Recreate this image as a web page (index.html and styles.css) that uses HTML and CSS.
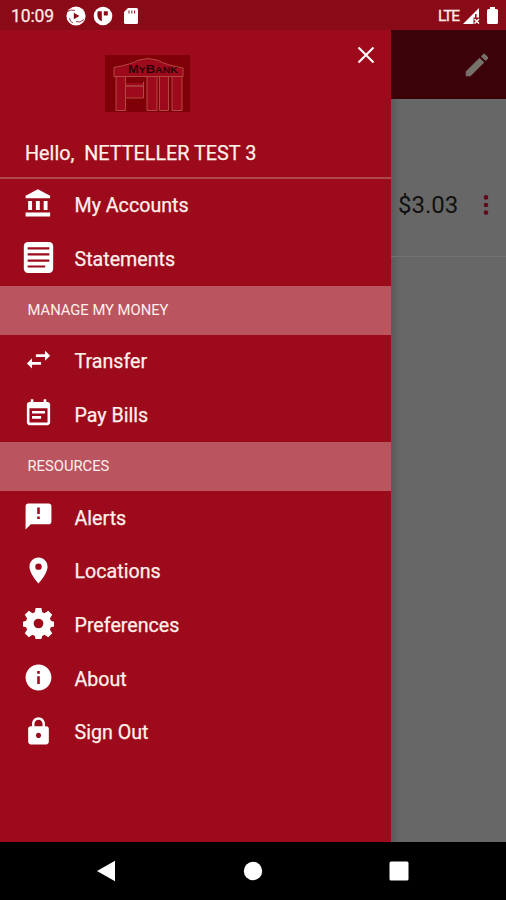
FILE: index.html
```html
<!DOCTYPE html>
<html lang="en">
<head>
<meta charset="utf-8">
<title>MyBank</title>
<link rel="stylesheet" href="styles.css">
</head>
<body>
<div class="phone">
  <header class="status">
    <span class="clock">10:09</span>
    <svg class="status-icon" viewBox="0 0 20 20"><circle cx="10" cy="10" r="9.600" fill="#fff"/><path d="M7.800 6.800v6.400l5.600-3.200z" fill="#8b0a17"/><path d="M1.500 5.500Q5 3 9 4.500M18 13.500Q14 17.500 10 15.500M3.500 12Q4 16 7 17" fill="none" stroke="#8b0a17" stroke-width=".8"/></svg>
    <svg class="status-icon second" viewBox="0 0 20 20"><circle cx="10" cy="10" r="9.300" fill="#fff"/><path d="M4.800 5.200h4v10C5 14 3.500 10 4.800 5.200zM10.800 5.200h4v4.300h-4z" fill="#8b0a17"/></svg>
    <svg class="sd" viewBox="0 0 14 16"><path d="M4 0h8.500Q14 0 14 1.500v13q0 1.500-1.500 1.500h-11Q0 16 0 14.500V4z" fill="#fff"/><path d="M5 2.500v3M7.800 2.500v3M10.600 2.500v3" stroke="#8b0a17" stroke-width="1"/></svg>
    <span class="lte">LTE</span>
    <svg class="signal" viewBox="0 0 17 16"><path d="M16 0v9.500h-5.500V16H0z" fill="#fff"/><path d="M11.500 11l4.500 4.500m0-4.500-4.500 4.500" stroke="#fff" stroke-width="1.500"/><path d="M12.800 6v4" stroke="#8b0a17" stroke-width="1.500"/></svg>
    <svg class="battery" viewBox="0 0 11 17"><path d="M3 0h5v2h1.500Q11 2 11 3.500v12q0 1.500-1.500 1.500h-8Q0 17 0 15.500v-12Q0 2 1.500 2H3z" fill="#fff"/></svg>
  </header>
  <main class="screen">
    <nav class="drawer">
      <div class="profile">
        <svg class="logo" viewBox="0 0 85 57">
          <path fill="#800007" d="M0 0h85v57H0z"/>
          <g fill="#9d0a1b" stroke="#b34743" stroke-width="1"><path d="M9 12.500Q27 9 34 5q9-3 18 0 9 5 26 8v8.500H9z"/><path d="M11 21.500h9.500v34H11zM20.500 31h18v-4h-18M20.500 31h18v12h-18zM42 21.500h10v34H42zM54.500 21.500h9v34h-9zM67 21.500h10v34H67z"/></g>
          <path fill="#800007" d="M21 22h17v6H21z"/>
          <text class="logo-text" x="23" y="17.500" textLength="50" lengthAdjust="spacingAndGlyphs">M<tspan class="small">Y</tspan>B<tspan class="small">ANK</tspan></text>
        </svg>
        <svg class="close" viewBox="0 0 18 18"><path d="m1.500 1.500 15 15m0-15-15 15" stroke="#fff" stroke-width="2.100"/></svg>
        <p class="hello">Hello,&nbsp; NETTELLER TEST 3</p>
      </div>
      <a class="row"><svg class="icon" viewBox="0 0 24 24"><path d="M4 10v7h3v-7H4zm6 0v7h3v-7h-3zM2 22h19v-3H2v3zm14-12v7h3v-7h-3zM11.500 1 2 6v2h19V6l-9.500-5z"/></svg><span>My Accounts</span></a>
      <a class="row"><svg class="icon" viewBox="0 0 30 30"><rect x=".8" y="0" width="28.400" height="30" rx="4"/><path d="M4.500 6.200h21M4.500 12h21M4.500 18h21M4.500 23.700h17" stroke="#9d0a1b" stroke-width="2"/></svg><span>Statements</span></a>
      <h2 class="section">MANAGE MY MONEY</h2>
      <a class="row"><svg class="icon transfer" viewBox="0 0 24 24"><path d="M6.990 11 3 15l3.990 4v-3H14v-2H6.990v-3zM21 9l-3.990-4v3H10v2h7.010v3L21 9z"/></svg><span>Transfer</span></a>
      <a class="row"><svg class="icon" viewBox="0 0 24 24"><path d="M17 10H7v2h10v-2zm2-7h-1V1h-2v2H8V1H6v2H5c-1.110 0-1.990.9-1.990 2L3 19c0 1.100.89 2 2 2h14c1.100 0 2-.9 2-2V5c0-1.100-.9-2-2-2zm0 16H5V8h14v11zm-5-5H7v2h7v-2z"/></svg><span>Pay Bills</span></a>
      <h2 class="section">RESOURCES</h2>
      <a class="row"><svg class="icon" viewBox="0 0 24 24"><path d="M20 2H4c-1.100 0-1.990.9-1.990 2L2 22l4-4h14c1.100 0 2-.9 2-2V4c0-1.100-.9-2-2-2zm-7 12h-2v-2h2v2zm0-4h-2V5h2v5z"/></svg><span>Alerts</span></a>
      <a class="row"><svg class="icon" viewBox="0 0 24 24"><path d="M12 2C8.130 2 5 5.130 5 9c0 5.250 7 13 7 13s7-7.750 7-13c0-3.870-3.130-7-7-7zm0 9.500a2.500 2.500 0 0 1 0-5 2.500 2.500 0 0 1 0 5z"/></svg><span>Locations</span></a>
      <a class="row"><svg class="icon" viewBox="0 0 30 30"><path fill-rule="evenodd" d="M12.200 0h5.600l.8 4 2.300 1 3.500-2.300 3.900 3.900L26 10.100l1 2.300 3 .8v4.600l-3 .8-1 2.300 2.300 3.500-3.900 3.900-3.500-2.300-2.300 1-.8 3h-5.600l-.8-3-2.300-1-3.500 2.300-3.900-3.900L4 20.900l-1-2.300-3-.8v-4.600l3-.8 1-2.300-2.300-3.500 3.900-3.900L9.100 5l2.300-1zM15 10.300a4.700 4.700 0 1 0 0 9.400 4.700 4.700 0 0 0 0-9.400z"/></svg><span>Preferences</span></a>
      <a class="row"><svg class="icon" viewBox="0 0 24 24"><path d="M12 2C6.480 2 2 6.480 2 12s4.480 10 10 10 10-4.480 10-10S17.520 2 12 2zm1 15h-2v-6h2v6zm0-8h-2V7h2v2z"/></svg><span>About</span></a>
      <a class="row"><svg class="icon" viewBox="0 0 24 24"><path d="M18 8h-1V6c0-2.760-2.240-5-5-5S7 3.240 7 6v2H6c-1.100 0-2 .9-2 2v10c0 1.100.9 2 2 2h12c1.100 0 2-.9 2-2V10c0-1.100-.9-2-2-2zm-6 9c-1.100 0-2-.9-2-2s.9-2 2-2 2 .9 2 2-.9 2-2 2zm3.100-9H8.900V6c0-1.710 1.390-3.100 3.100-3.100 1.710 0 3.100 1.390 3.100 3.100v2z"/></svg><span>Sign Out</span></a>
    </nav>
    <section class="behind">
      <div class="appbar"><svg class="pencil" viewBox="0 0 24 24"><path d="M3 17.250V21h3.750L17.810 9.940l-3.750-3.750L3 17.250zM20.710 7.040a1 1 0 0 0 0-1.410l-2.340-2.340a1 1 0 0 0-1.410 0l-1.830 1.830 3.750 3.750 1.830-1.830z"/></svg></div>
      <div class="account"><span>$3.03</span><svg class="more" viewBox="0 0 6 20"><circle cx="3" cy="2.400" r="2.300"/><circle cx="3" cy="10" r="2.300"/><circle cx="3" cy="17.600" r="2.300"/></svg></div>
    </section>
  </main>
  <footer class="navbar">
    <svg viewBox="0 0 20 22"><path d="M1 11 19 .700v20.600z"/></svg>
    <svg viewBox="0 0 20 22"><circle cx="10" cy="11" r="9.200"/></svg>
    <svg viewBox="0 0 20 22"><rect x=".5" y="1.500" width="19" height="19" rx="1.500"/></svg>
  </footer>
</div>
</body>
</html>
```
FILE: styles.css
```css
* { box-sizing: border-box; }
body { margin: 0; font-family: Roboto, "Liberation Sans", sans-serif; color: #fff; }
svg { display: block; flex: none; }
.phone { width: 506px; height: 900px; display: flex; flex-direction: column; overflow: hidden; background: #000; }
.status { height: 30px; flex: none; display: flex; align-items: center; background: #8b0a17; padding: 1px 8px 0 11px; }
.clock { font-size: 17.5px; width: 55px; letter-spacing: -.1px; color: #ffe9e6; -webkit-text-stroke: .25px; }
.status-icon { width: 20px; height: 20px; }
.second { margin-left: 7px; }
.sd { width: 14px; height: 16px; margin-left: 11px; }
.lte { margin-left: auto; font-size: 15.5px; letter-spacing: -1.1px; color: #ffe9e6; -webkit-text-stroke: .35px; }
.signal { width: 17px; height: 16px; margin-left: 4px; }
.battery { width: 11px; height: 17px; margin-left: 7px; }
.screen { height: 812px; flex: none; display: flex; }
.drawer { width: 391px; flex: none; background: #9d0a1b; }
.profile { height: 148.500px; display: grid; grid-template-columns: 105px 85px 1fr; grid-template-rows: 82px 1fr; border-bottom: 2px solid #b04849; }
.logo { grid-column: 2; width: 85px; height: 57px; align-self: end; }
.logo-text { font: bold 11px "Liberation Sans", sans-serif; fill: #2d0008; }
.small { font-size: 9px; }
.close { grid-column: 3; width: 18px; height: 18px; justify-self: end; margin: 16px 16px 0 0; }
.hello { grid-column: 1 / -1; margin: 30px 0 0 25px; font-size: 19.8px; line-height: 24px; white-space: nowrap; color: #fff0ec; -webkit-text-stroke: .25px; }
.row { height: 53.700px; display: flex; align-items: center; padding-left: 23px; font-size: 19.650px; color: #fff0ec; -webkit-text-stroke: .25px; }
.icon { width: 31px; height: 31px; fill: #fff; margin: -3.500px 20.500px 0 0; }
.section { height: 49px; margin: 0; padding-left: 27.500px; font-size: 14.750px; font-weight: 400; line-height: 49px; background: #ba5560; color: #fff0ec; }
.behind { flex: 1; background: linear-gradient(90deg, #5a5a5a, #676767 9px); }
.appbar { height: 69px; background: #3c020a; display: flex; align-items: center; justify-content: flex-end; padding-right: 14px; }
.pencil { width: 30px; height: 30px; fill: #77716b; }
.account { height: 158px; padding: 54px 17px 0 7px; display: flex; align-items: center; justify-content: space-between; font-size: 24px; color: #111; border-bottom: 1px solid #727272; }
.more { width: 6px; height: 20px; fill: #65061a; }
.navbar { flex: 1; display: flex; align-items: center; justify-content: space-between; padding: 0 97px 0 96px; }
.navbar svg { width: 20px; height: 22px; fill: #fff; }
```
